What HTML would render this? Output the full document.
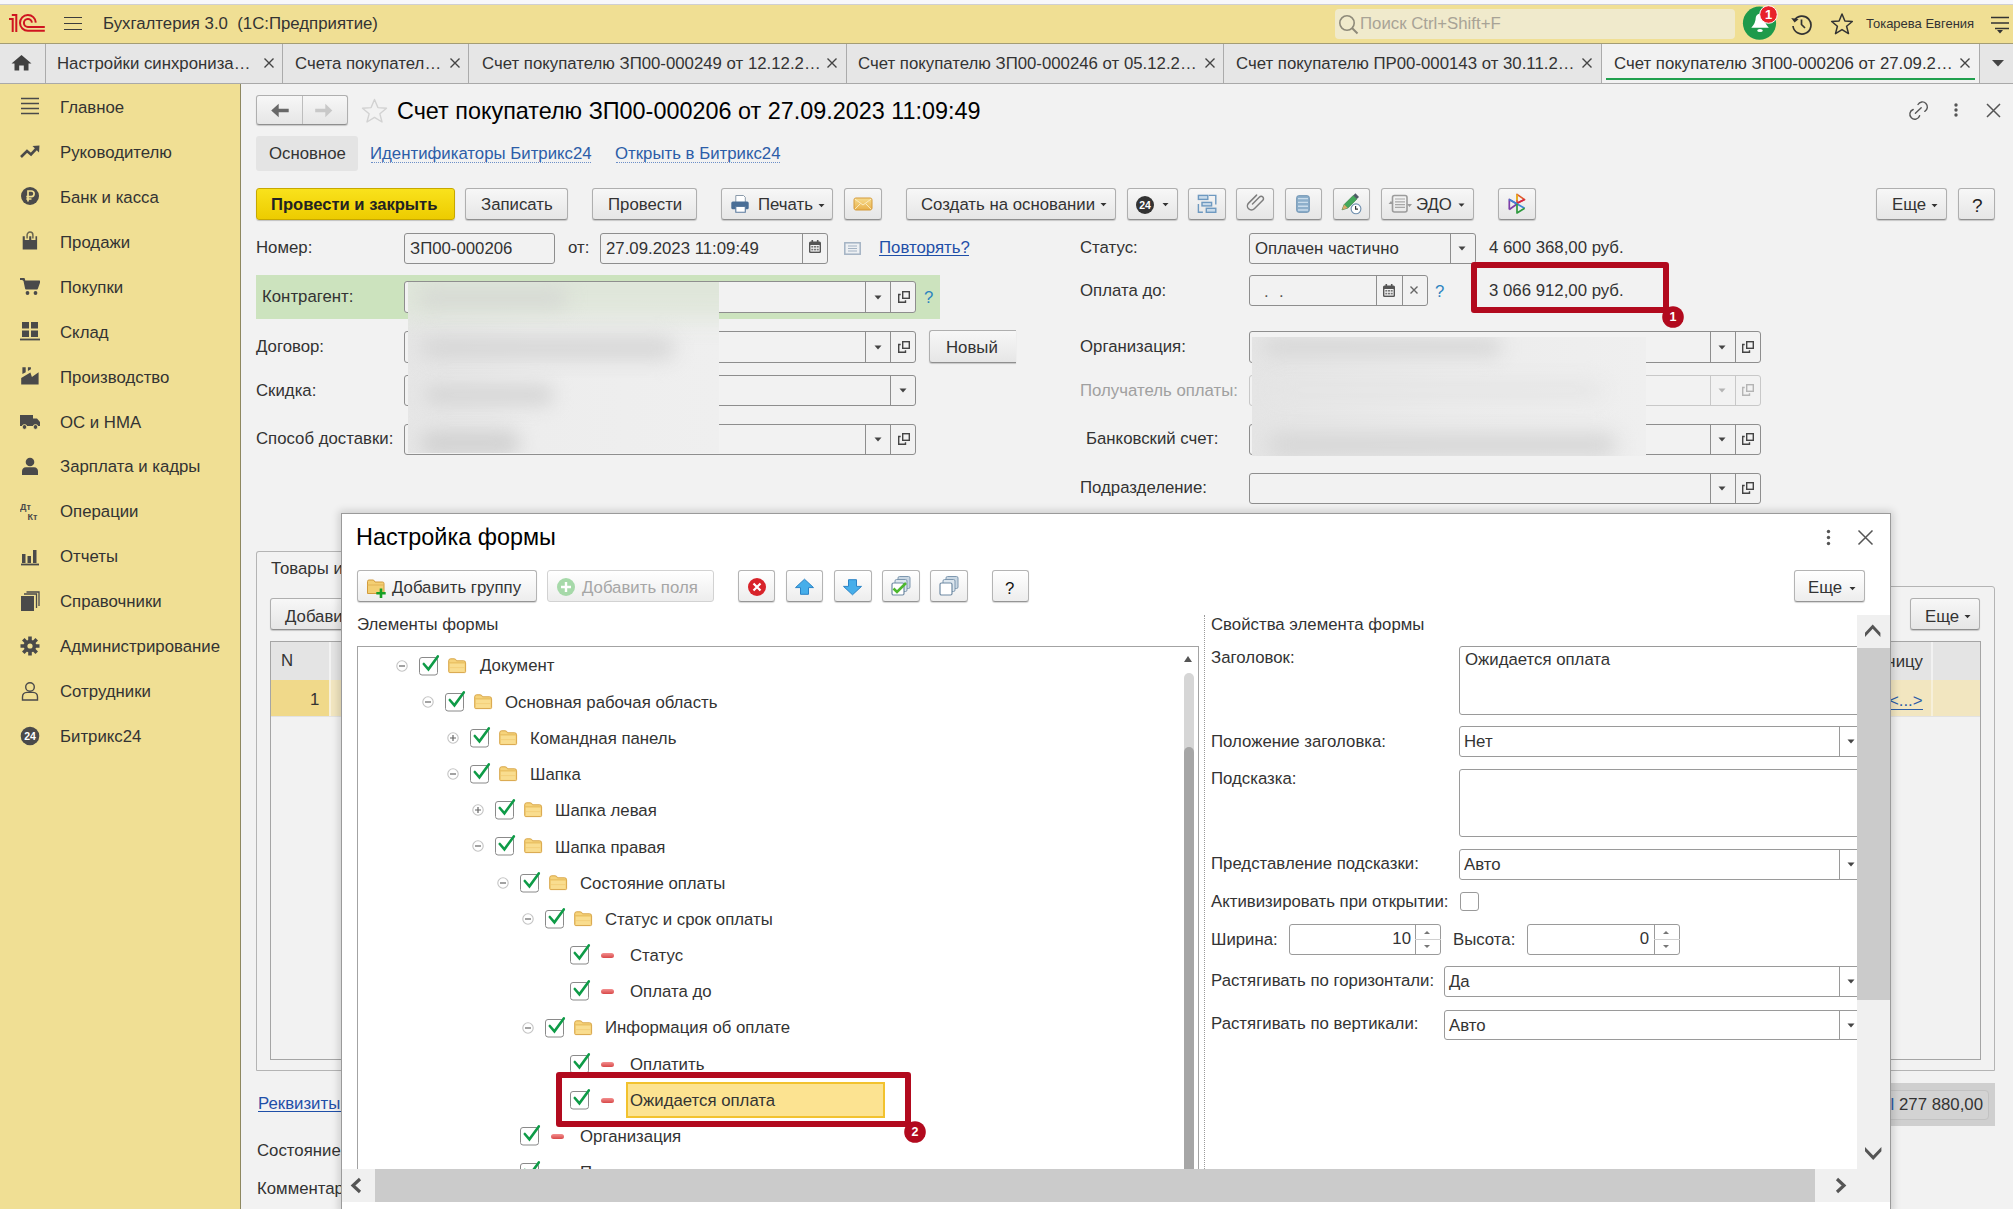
<!DOCTYPE html><html><head><meta charset="utf-8"><style>
html,body{margin:0;padding:0;width:2013px;height:1209px;overflow:hidden;background:#F2F2F2;font-family:"Liberation Sans",sans-serif;}
.t{position:absolute;white-space:pre;line-height:1;font-family:"Liberation Sans",sans-serif;}
.r{position:absolute;box-sizing:border-box;}
</style></head><body>
<div class="r" style="left:0px;top:0px;width:2013px;height:5px;background:#F7F7FB"></div>
<div class="r" style="left:0px;top:4px;width:2013px;height:1px;background:#CFCFD4"></div>
<div class="r" style="left:0px;top:5px;width:2013px;height:38px;background:#F0DF94"></div>
<div class="r" style="left:0px;top:43px;width:2013px;height:1px;background:#A49D74"></div>
<svg class="r" style="left:0px;top:0px;" width="50" height="40" viewBox="0 0 50 40"><g fill="none" stroke="#CF1520" stroke-width="2">
<path d="M9 19 H12.7 V32"/>
<path d="M11.8 15 H16.3 V32"/>
<path d="M35.8 22.6 A7.9 7.9 0 1 0 27.9 30.8 H44.8"/>
<path d="M31.9 22.6 A4 4 0 1 0 27.9 26.9 H44.8"/>
</g></svg>
<div class="r" style="left:64px;top:17px;width:18px;height:2px;background:#3c3c3c;height:1.3px"></div>
<div class="r" style="left:64px;top:23px;width:18px;height:2px;background:#3c3c3c;height:1.3px"></div>
<div class="r" style="left:64px;top:29px;width:18px;height:2px;background:#3c3c3c;height:1.3px"></div>
<div class="t" style="left:103px;top:16px;font-size:16.8px;color:#333;font-weight:400;">Бухгалтерия 3.0  (1С:Предприятие)</div>
<div class="r" style="left:1335px;top:9px;width:400px;height:30px;background:#F0EACC;border-radius:4px"></div>
<svg class="r" style="left:1338px;top:14px;" width="22" height="22" viewBox="0 0 22 22"><circle cx="9" cy="9" r="7.2" fill="none" stroke="#8E8A7A" stroke-width="1.6"/><path d="M14 14 L19.5 19.5" stroke="#8E8A7A" stroke-width="2"/></svg>
<div class="t" style="left:1360px;top:16px;font-size:16.8px;color:#A8A396;font-weight:400;">Поиск Ctrl+Shift+F</div>
<svg class="r" style="left:1742px;top:6px;" width="36" height="36" viewBox="0 0 36 36"><circle cx="17.5" cy="17.2" r="16.6" fill="#1E9A4B"/><path d="M9.3 21.8 L26.8 21.8 Q22.3 17 22.3 12 A4.3 4.3 0 0 0 13.7 12 Q13.7 17 9.3 21.8Z" fill="#fff"/><ellipse cx="18" cy="24.6" rx="2.8" ry="1.5" fill="#fff"/></svg>
<svg class="r" style="left:1759px;top:5px;" width="20" height="20" viewBox="0 0 20 20"><circle cx="9.5" cy="9.5" r="8.8" fill="#E8222A" stroke="#fff" stroke-width="1"/><text x="9.6" y="14.2" font-family="Liberation Sans" font-weight="700" font-size="13" fill="#fff" text-anchor="middle">1</text></svg>
<svg class="r" style="left:1789px;top:12px;" width="24" height="24" viewBox="0 0 24 24"><path d="M5.2 8.5 A9 9 0 1 1 4 14" fill="none" stroke="#333" stroke-width="1.7"/><path d="M2.2 6 L5.6 10.6 L9.6 7.2 Z" fill="#333"/><path d="M12.5 7.5 V12.5 L16 16" fill="none" stroke="#333" stroke-width="1.7"/></svg>
<svg class="r" style="left:1830px;top:12px;" width="24" height="24" viewBox="0 0 24 24"><path d="M12 2 L14.9 9 L22.3 9.5 L16.6 14.3 L18.5 21.6 L12 17.6 L5.5 21.6 L7.4 14.3 L1.7 9.5 L9.1 9 Z" fill="none" stroke="#333" stroke-width="1.5" stroke-linejoin="round"/></svg>
<div class="t" style="left:1866px;top:17px;font-size:13px;color:#333;font-weight:400;">Токарева Евгения</div>
<svg class="r" style="left:1988px;top:14px;" width="24" height="22" viewBox="0 0 24 22"><path d="M3 3.5 H21 M3 9 H21 M7 14.5 H21" stroke="#333" stroke-width="1.5"/><path d="M9 16 L15 16 L12 19.5 Z" fill="#333"/></svg>
<div class="r" style="left:0px;top:44px;width:2013px;height:39px;background:#E6E6E6"></div>
<div class="r" style="left:1602px;top:44px;width:377px;height:39px;background:#F2F2F2"></div>
<div class="r" style="left:0px;top:83px;width:2013px;height:1px;background:#A9A9A9"></div>
<div class="r" style="left:45px;top:44px;width:1px;height:39px;background:#ABABAB"></div>
<div class="r" style="left:282px;top:44px;width:1px;height:39px;background:#ABABAB"></div>
<div class="r" style="left:468px;top:44px;width:1px;height:39px;background:#ABABAB"></div>
<div class="r" style="left:846px;top:44px;width:1px;height:39px;background:#ABABAB"></div>
<div class="r" style="left:1223px;top:44px;width:1px;height:39px;background:#ABABAB"></div>
<div class="r" style="left:1601px;top:44px;width:1px;height:39px;background:#ABABAB"></div>
<div class="r" style="left:1979px;top:44px;width:1px;height:39px;background:#ABABAB"></div>
<div class="r" style="left:1606px;top:78px;width:369px;height:2px;background:#21A04E"></div>
<svg class="r" style="left:11px;top:54px;" width="21" height="18" viewBox="0 0 21 18"><path d="M10.5 1 L20.5 9.5 L17.5 9.5 L17.5 16.5 L12.8 16.5 L12.8 11.5 L8.2 11.5 L8.2 16.5 L3.5 16.5 L3.5 9.5 L0.5 9.5 Z" fill="#404040"/></svg>
<div class="t" style="left:57px;top:56px;font-size:16.8px;color:#333;font-weight:400;">Настройки синхрониза…</div>
<svg class="r" style="left:263px;top:57px;" width="12" height="12" viewBox="0 0 12 12"><path d="M1.5 1.5 L10.5 10.5 M10.5 1.5 L1.5 10.5" stroke="#444" stroke-width="1.4"/></svg>
<div class="t" style="left:295px;top:56px;font-size:16.8px;color:#333;font-weight:400;">Счета покупател…</div>
<svg class="r" style="left:449px;top:57px;" width="12" height="12" viewBox="0 0 12 12"><path d="M1.5 1.5 L10.5 10.5 M10.5 1.5 L1.5 10.5" stroke="#444" stroke-width="1.4"/></svg>
<div class="t" style="left:482px;top:56px;font-size:16.8px;color:#333;font-weight:400;">Счет покупателю ЗП00-000249 от 12.12.2…</div>
<svg class="r" style="left:826px;top:57px;" width="12" height="12" viewBox="0 0 12 12"><path d="M1.5 1.5 L10.5 10.5 M10.5 1.5 L1.5 10.5" stroke="#444" stroke-width="1.4"/></svg>
<div class="t" style="left:858px;top:56px;font-size:16.8px;color:#333;font-weight:400;">Счет покупателю ЗП00-000246 от 05.12.2…</div>
<svg class="r" style="left:1204px;top:57px;" width="12" height="12" viewBox="0 0 12 12"><path d="M1.5 1.5 L10.5 10.5 M10.5 1.5 L1.5 10.5" stroke="#444" stroke-width="1.4"/></svg>
<div class="t" style="left:1236px;top:56px;font-size:16.8px;color:#333;font-weight:400;">Счет покупателю ПР00-000143 от 30.11.2…</div>
<svg class="r" style="left:1581px;top:57px;" width="12" height="12" viewBox="0 0 12 12"><path d="M1.5 1.5 L10.5 10.5 M10.5 1.5 L1.5 10.5" stroke="#444" stroke-width="1.4"/></svg>
<div class="t" style="left:1614px;top:56px;font-size:16.8px;color:#333;font-weight:400;">Счет покупателю ЗП00-000206 от 27.09.2…</div>
<svg class="r" style="left:1959px;top:57px;" width="12" height="12" viewBox="0 0 12 12"><path d="M1.5 1.5 L10.5 10.5 M10.5 1.5 L1.5 10.5" stroke="#444" stroke-width="1.4"/></svg>
<svg class="r" style="left:1990px;top:57px;" width="16" height="12" viewBox="0 0 16 12"><path d="M2 3 L14 3 L8 9.5 Z" fill="#444"/></svg>
<div class="r" style="left:0px;top:84px;width:241px;height:1125px;background:#F0DF94"></div>
<div class="r" style="left:240px;top:84px;width:1px;height:1125px;background:#8E8860"></div>
<svg class="r" style="left:20px;top:96px;" width="20" height="20" viewBox="0 0 20 20"><path d="M1 2.5 H19 M1 7.5 H19 M1 12.5 H19 M1 17.5 H19" stroke="#4a4a4a" stroke-width="1.6"/></svg>
<div class="t" style="left:60px;top:100px;font-size:16.8px;color:#333;font-weight:400;">Главное</div>
<svg class="r" style="left:20px;top:141px;" width="20" height="20" viewBox="0 0 20 20"><path d="M1 16 L7 10 L11 13.5 L17 7" fill="none" stroke="#4a4a4a" stroke-width="2.6"/><path d="M12.5 5 L19.5 4.5 L19 11.5 Z" fill="#4a4a4a"/></svg>
<div class="t" style="left:60px;top:145px;font-size:16.8px;color:#333;font-weight:400;">Руководителю</div>
<svg class="r" style="left:20px;top:186px;" width="20" height="20" viewBox="0 0 20 20"><circle cx="10" cy="10" r="9" fill="#4a4a4a"/><path d="M8 15.5 V5 H11.3 A2.8 2.8 0 0 1 11.3 10.6 H6.3 M6.3 13 H11.5" fill="none" stroke="#F0DF94" stroke-width="1.7"/></svg>
<div class="t" style="left:60px;top:190px;font-size:16.8px;color:#333;font-weight:400;">Банк и касса</div>
<svg class="r" style="left:20px;top:231px;" width="20" height="20" viewBox="0 0 20 20"><path d="M2.7 5.2 H4.8 V8.9 H9.2 V5.2 H11.3 V8.9 H15.5 V5.2 H17.1 V18.6 H2.7Z" fill="#4a4a4a"/><path d="M7.1 7.6 V4 A2.9 2.9 0 0 1 12.9 4 V7.6" fill="none" stroke="#6a6550" stroke-width="1.5"/></svg>
<div class="t" style="left:60px;top:235px;font-size:16.8px;color:#333;font-weight:400;">Продажи</div>
<svg class="r" style="left:20px;top:276px;" width="20" height="20" viewBox="0 0 20 20"><path d="M0 3 H4 L6 12.5 H17 L19.5 5.5 H5" fill="#4a4a4a" stroke="#4a4a4a" stroke-width="1.8" stroke-linejoin="round"/><circle cx="7.5" cy="17" r="1.9" fill="#4a4a4a"/><circle cx="15.5" cy="17" r="1.9" fill="#4a4a4a"/></svg>
<div class="t" style="left:60px;top:280px;font-size:16.8px;color:#333;font-weight:400;">Покупки</div>
<svg class="r" style="left:20px;top:321px;" width="20" height="20" viewBox="0 0 20 20"><path d="M2 1 H9 V7.5 H2 Z M11 1 H18 V7.5 H11 Z M2 9.5 H9 V16 H2 Z M11 9.5 H18 V16 H11 Z" fill="#4a4a4a"/><path d="M0 18.5 H20" stroke="#4a4a4a" stroke-width="1.8"/></svg>
<div class="t" style="left:60px;top:325px;font-size:16.8px;color:#333;font-weight:400;">Склад</div>
<svg class="r" style="left:20px;top:366px;" width="20" height="20" viewBox="0 0 20 20"><path d="M2.4 1.2 H5.7 V6.2 L2.4 8.1Z M7.9 1.2 H10.9 V3.2 L7.9 4.9Z M1.2 18.6 V11.9 L10.4 6.4 L11.9 10.9 L18.6 6.2 V18.6Z" fill="#4a4a4a"/></svg>
<div class="t" style="left:60px;top:370px;font-size:16.8px;color:#333;font-weight:400;">Производство</div>
<svg class="r" style="left:20px;top:411px;" width="20" height="20" viewBox="0 0 20 20"><path d="M0 4 H13 V15 H0 Z M13 7.5 H17 L20 11 V15 H13Z" fill="#4a4a4a"/><circle cx="4.5" cy="16" r="2.4" fill="#4a4a4a" stroke="#F0DF94" stroke-width="1"/><circle cx="15.5" cy="16" r="2.4" fill="#4a4a4a" stroke="#F0DF94" stroke-width="1"/></svg>
<div class="t" style="left:60px;top:415px;font-size:16.8px;color:#333;font-weight:400;">ОС и НМА</div>
<svg class="r" style="left:20px;top:456px;" width="20" height="20" viewBox="0 0 20 20"><circle cx="10" cy="6" r="4.3" fill="#4a4a4a"/><path d="M2 19 V15.5 Q2 11.5 6 11.3 H14 Q18 11.5 18 15.5 V19 Z" fill="#4a4a4a"/></svg>
<div class="t" style="left:60px;top:459px;font-size:16.8px;color:#333;font-weight:400;">Зарплата и кадры</div>
<svg class="r" style="left:20px;top:501px;" width="20" height="20" viewBox="0 0 20 20"><text x="0" y="9" font-family="Liberation Sans" font-size="9" font-weight="700" fill="#4a4a4a">Дт</text><text x="7.5" y="19" font-family="Liberation Sans" font-size="9" font-weight="700" fill="#4a4a4a">Кт</text></svg>
<div class="t" style="left:60px;top:504px;font-size:16.8px;color:#333;font-weight:400;">Операции</div>
<svg class="r" style="left:20px;top:546px;" width="20" height="20" viewBox="0 0 20 20"><path d="M1 18.5 H19" stroke="#4a4a4a" stroke-width="1.8"/><path d="M2 8 H5.5 V17 H2 Z M7.5 10 H11 V17 H7.5 Z M13 4 H16.5 V17 H13 Z" fill="#4a4a4a"/></svg>
<div class="t" style="left:60px;top:549px;font-size:16.8px;color:#333;font-weight:400;">Отчеты</div>
<svg class="r" style="left:20px;top:591px;" width="20" height="20" viewBox="0 0 20 20"><path d="M1 5 H14 V20 H1 Z" fill="#4a4a4a"/><path d="M4 3 H16.5 V17 M6.5 1 H19 V15" fill="none" stroke="#4a4a4a" stroke-width="1.3"/></svg>
<div class="t" style="left:60px;top:594px;font-size:16.8px;color:#333;font-weight:400;">Справочники</div>
<svg class="r" style="left:20px;top:636px;" width="20" height="20" viewBox="0 0 20 20"><g fill="#4a4a4a"><circle cx="10" cy="10" r="6.3"/><path d="M8.2 0.5 H11.8 V5 H8.2Z M8.2 15 H11.8 V19.5 H8.2Z M0.5 8.2 V11.8 H5 V8.2Z M15 8.2 V11.8 H19.5 V8.2Z" /><path d="M8.2 0.5 H11.8 V5 H8.2Z M8.2 15 H11.8 V19.5 H8.2Z M0.5 8.2 V11.8 H5 V8.2Z M15 8.2 V11.8 H19.5 V8.2Z" transform="rotate(45 10 10)"/></g><circle cx="10" cy="10" r="2.6" fill="#F0DF94"/></svg>
<div class="t" style="left:60px;top:639px;font-size:16.8px;color:#333;font-weight:400;">Администрирование</div>
<svg class="r" style="left:20px;top:681px;" width="20" height="20" viewBox="0 0 20 20"><circle cx="10" cy="6" r="4.3" fill="none" stroke="#4a4a4a" stroke-width="1.4"/><path d="M2.5 19 V16 Q2.5 11.6 7 11.4 H13 Q17.5 11.6 17.5 16 V19 Z" fill="none" stroke="#4a4a4a" stroke-width="1.4"/></svg>
<div class="t" style="left:60px;top:684px;font-size:16.8px;color:#333;font-weight:400;">Сотрудники</div>
<svg class="r" style="left:20px;top:726px;" width="20" height="20" viewBox="0 0 20 20"><circle cx="10" cy="10" r="9.3" fill="#4a4a4a"/><text x="10" y="14" font-family="Liberation Sans" font-size="10.5" font-weight="700" fill="#fff" text-anchor="middle">24</text></svg>
<div class="t" style="left:60px;top:729px;font-size:16.8px;color:#333;font-weight:400;">Битрикс24</div>
<div class="r" style="left:256px;top:95px;width:92px;height:30px;background:linear-gradient(#F7F7F7,#E6E6E6);border:1px solid #AFAFAF;border-bottom-color:#8F8F8F;border-radius:3px;box-shadow:0 1px 1px rgba(0,0,0,0.18);"></div>
<div class="r" style="left:302px;top:96px;width:1px;height:28px;background:#BDBDBD"></div>
<svg class="r" style="left:269px;top:101px;" width="22" height="18" viewBox="0 0 22 18"><path d="M2.2 9.5 L9.7 2.8 L9.7 7.8 L19.7 7.8 L19.7 11.2 L9.7 11.2 L9.7 16.2 Z" fill="#686868"/></svg>
<svg class="r" style="left:313px;top:101px;" width="22" height="18" viewBox="0 0 22 18"><path d="M19.3 9.5 L12.3 2.8 L12.3 7.8 L2.2 7.8 L2.2 11.2 L12.3 11.2 L12.3 16.2 Z" fill="#C8C8C8"/></svg>
<svg class="r" style="left:361px;top:98px;" width="27" height="25" viewBox="0 0 27 25"><path d="M13.5 1.5 L16.9 9.6 L25.5 10.2 L18.9 15.8 L21 24 L13.5 19.4 L6 24 L8.1 15.8 L1.5 10.2 L10.1 9.6 Z" fill="none" stroke="#D2D2D2" stroke-width="1.4" stroke-linejoin="round"/></svg>
<div class="t" style="left:397px;top:100px;font-size:23.4px;color:#000;font-weight:400;">Счет покупателю ЗП00-000206 от 27.09.2023 11:09:49</div>
<svg class="r" style="left:1906px;top:99px;" width="24" height="22" viewBox="0 0 24 22"><g fill="none" stroke="#555" stroke-width="1.4" stroke-linecap="round"><path d="M12 5.5 A5 5 0 1 1 18.8 12.3"/><path d="M7.2 10.5 A5 5 0 1 0 13.6 16.7"/><path d="M9.4 14.2 L15.2 8.7"/></g></svg>
<svg class="r" style="left:1953px;top:102px;" width="6" height="6" viewBox="0 0 6 6"><circle cx="3" cy="3" r="1.7" fill="#555"/></svg>
<svg class="r" style="left:1953px;top:107px;" width="6" height="6" viewBox="0 0 6 6"><circle cx="3" cy="3" r="1.7" fill="#555"/></svg>
<svg class="r" style="left:1953px;top:112px;" width="6" height="6" viewBox="0 0 6 6"><circle cx="3" cy="3" r="1.7" fill="#555"/></svg>
<svg class="r" style="left:1985px;top:102px;" width="17" height="16.8" viewBox="0 0 17 16.8"><path d="M2 2 L15 15 M15 2 L2 15" stroke="#555" stroke-width="1.5"/></svg>
<div class="r" style="left:256px;top:136px;width:102px;height:35px;background:#E4E4E4;border-radius:3px"></div>
<div class="t" style="left:269px;top:146px;font-size:16.8px;color:#333;font-weight:400;">Основное</div>
<div class="t" style="left:370px;top:146px;font-size:16.8px;color:#2C5DA8;font-weight:400;">Идентификаторы Битрикс24</div>
<div class="r" style="left:371px;top:162px;width:220px;height:1px;border-bottom:1px dotted #6C8FC8"></div>
<div class="t" style="left:615px;top:146px;font-size:16.8px;color:#2C5DA8;font-weight:400;">Открыть в Битрикс24</div>
<div class="r" style="left:616px;top:162px;width:164px;height:1px;border-bottom:1px dotted #6C8FC8"></div>
<div class="r" style="left:256px;top:188px;width:199px;height:32px;background:linear-gradient(#F9E21C,#EDCC00);border:1px solid #C7A800;border-radius:3px;box-shadow:0 1px 1px rgba(0,0,0,0.2)"></div>
<div class="t" style="left:271px;top:197px;font-size:16.6px;color:#222;font-weight:700;">Провести и закрыть</div>
<div class="r" style="left:465px;top:188px;width:103px;height:32px;background:linear-gradient(#F7F7F7,#E6E6E6);border:1px solid #AFAFAF;border-bottom-color:#8F8F8F;border-radius:3px;box-shadow:0 1px 1px rgba(0,0,0,0.18);"></div>
<div class="t" style="left:481px;top:197px;font-size:16.8px;color:#333;font-weight:400;">Записать</div>
<div class="r" style="left:592px;top:188px;width:105px;height:32px;background:linear-gradient(#F7F7F7,#E6E6E6);border:1px solid #AFAFAF;border-bottom-color:#8F8F8F;border-radius:3px;box-shadow:0 1px 1px rgba(0,0,0,0.18);"></div>
<div class="t" style="left:608px;top:197px;font-size:16.8px;color:#333;font-weight:400;">Провести</div>
<div class="r" style="left:721px;top:188px;width:112px;height:32px;background:linear-gradient(#F7F7F7,#E6E6E6);border:1px solid #AFAFAF;border-bottom-color:#8F8F8F;border-radius:3px;box-shadow:0 1px 1px rgba(0,0,0,0.18);"></div>
<svg class="r" style="left:729px;top:193px;" width="22" height="22" viewBox="0 0 22 22"><path d="M6.8 2.5 H14.5 L16.3 4.3 V10 H6.8Z" fill="#fff" stroke="#8A9AAA" stroke-width="1"/><rect x="2.3" y="8.4" width="17.4" height="7.9" rx="1.6" fill="#4A6E96"/><path d="M6.8 13.5 H16.3 V19.3 H6.8Z" fill="#fff" stroke="#5A7A9E" stroke-width="1.1"/></svg>
<div class="t" style="left:758px;top:197px;font-size:16.8px;color:#333;font-weight:400;">Печать</div>
<svg class="r" style="left:817px;top:203px;" width="9" height="6" viewBox="0 0 9 6"><path d="M1.5 1 H7.5 L4.5 4.3Z" fill="#333"/></svg>
<div class="r" style="left:844px;top:188px;width:38px;height:32px;background:linear-gradient(#F7F7F7,#E6E6E6);border:1px solid #AFAFAF;border-bottom-color:#8F8F8F;border-radius:3px;box-shadow:0 1px 1px rgba(0,0,0,0.18);"></div>
<svg class="r" style="left:853px;top:197px;" width="20" height="14" viewBox="0 0 20 14"><defs><linearGradient id="env" x1="0" y1="0" x2="0" y2="1"><stop offset="0" stop-color="#F7DC8E"/><stop offset="1" stop-color="#E8B04A"/></linearGradient></defs><rect x="1" y="1" width="18" height="12" rx="1.8" fill="url(#env)" stroke="#D49A3A" stroke-width="1"/><path d="M1.8 2 L10 8 L18.2 2 M1.8 12.3 L7.5 6.5 M18.2 12.3 L12.5 6.5" fill="none" stroke="#FBEBC0" stroke-width="1"/></svg>
<div class="r" style="left:906px;top:188px;width:210px;height:32px;background:linear-gradient(#F7F7F7,#E6E6E6);border:1px solid #AFAFAF;border-bottom-color:#8F8F8F;border-radius:3px;box-shadow:0 1px 1px rgba(0,0,0,0.18);"></div>
<div class="t" style="left:921px;top:197px;font-size:16.8px;color:#333;font-weight:400;">Создать на основании</div>
<svg class="r" style="left:1099px;top:202px;" width="9" height="6" viewBox="0 0 9 6"><path d="M1.5 1 H7.5 L4.5 4.3Z" fill="#333"/></svg>
<div class="r" style="left:1127px;top:188px;width:51px;height:32px;background:linear-gradient(#F7F7F7,#E6E6E6);border:1px solid #AFAFAF;border-bottom-color:#8F8F8F;border-radius:3px;box-shadow:0 1px 1px rgba(0,0,0,0.18);"></div>
<svg class="r" style="left:1135px;top:195px;" width="20" height="20" viewBox="0 0 20 20"><circle cx="10" cy="10" r="9" fill="#333"/><text x="10" y="14" font-family="Liberation Sans" font-size="10.5" font-weight="700" fill="#fff" text-anchor="middle">24</text></svg>
<svg class="r" style="left:1161px;top:202px;" width="9" height="6" viewBox="0 0 9 6"><path d="M1.5 1 H7.5 L4.5 4.3Z" fill="#333"/></svg>
<div class="r" style="left:1188px;top:188px;width:38px;height:32px;background:linear-gradient(#F7F7F7,#E6E6E6);border:1px solid #AFAFAF;border-bottom-color:#8F8F8F;border-radius:3px;box-shadow:0 1px 1px rgba(0,0,0,0.18);"></div>
<svg class="r" style="left:1196px;top:193px;" width="22" height="22" viewBox="0 0 22 22"><g fill="#C9DBEA" stroke="#6E99C0" stroke-width="1.4"><rect x="2.4" y="2.4" width="9.4" height="4"/><rect x="6" y="9.4" width="9.6" height="3.5"/><rect x="10.3" y="15.3" width="9.5" height="4"/></g><path d="M12.8 2.4 H19.8 V11.4 M2.4 10.9 V19.3 H6.9" fill="none" stroke="#6E99C0" stroke-width="1.4"/></svg>
<div class="r" style="left:1236px;top:188px;width:38px;height:32px;background:linear-gradient(#F7F7F7,#E6E6E6);border:1px solid #AFAFAF;border-bottom-color:#8F8F8F;border-radius:3px;box-shadow:0 1px 1px rgba(0,0,0,0.18);"></div>
<svg class="r" style="left:1244px;top:192px;" width="22" height="22" viewBox="0 0 22 22"><path d="M8.5 12 L15.5 5 A2.3 2.3 0 0 1 18.8 8.3 L10.3 16.8 A4 4 0 0 1 4.6 11.1 L12.6 3.1" fill="none" stroke="#7E7E7E" stroke-width="1.5" stroke-linecap="round"/></svg>
<div class="r" style="left:1285px;top:188px;width:37px;height:32px;background:linear-gradient(#F7F7F7,#E6E6E6);border:1px solid #AFAFAF;border-bottom-color:#8F8F8F;border-radius:3px;box-shadow:0 1px 1px rgba(0,0,0,0.18);"></div>
<svg class="r" style="left:1296px;top:195px;" width="14" height="18" viewBox="0 0 14 18"><rect x="0.7" y="0.7" width="12.6" height="16.6" rx="2" fill="#8DAFCB" stroke="#6E93B3" stroke-width="1"/><path d="M2 3.6 H12 M2 7.4 H12 M2 11.3 H12 M2 15 H12" stroke="#C9DCEB" stroke-width="1.4"/></svg>
<div class="r" style="left:1333px;top:188px;width:37px;height:32px;background:linear-gradient(#F7F7F7,#E6E6E6);border:1px solid #AFAFAF;border-bottom-color:#8F8F8F;border-radius:3px;box-shadow:0 1px 1px rgba(0,0,0,0.18);"></div>
<svg class="r" style="left:1340px;top:193px;" width="24" height="24" viewBox="0 0 24 24"><path d="M2 16.8 L4.2 11.5 L13.3 2.4 L16.9 6 L7.8 15.1 Z" fill="#43A85A" stroke="#2E7D3E" stroke-width="0.7"/><path d="M13.3 2.4 L15.4 0.3 L19 3.9 L16.9 6Z" fill="#4E5A66"/><path d="M2 16.8 L4.2 11.5 L7.8 15.1Z" fill="#D9A86A"/><circle cx="16" cy="15.8" r="4.9" fill="#fff" stroke="#6F8FAE" stroke-width="1.1"/><path d="M15.6 13 V16.2 H18" fill="none" stroke="#333" stroke-width="1.2"/></svg>
<div class="r" style="left:1381px;top:188px;width:93px;height:32px;background:linear-gradient(#F7F7F7,#E6E6E6);border:1px solid #AFAFAF;border-bottom-color:#8F8F8F;border-radius:3px;box-shadow:0 1px 1px rgba(0,0,0,0.18);"></div>
<svg class="r" style="left:1388px;top:193px;" width="24" height="22" viewBox="0 0 24 22"><rect x="4.5" y="2.5" width="14.5" height="16.5" rx="2" fill="none" stroke="#9C9C9C" stroke-width="1.6"/><path d="M7 6 H17 M7 8.8 H17 M7 11.6 H17 M7 14.4 H17" stroke="#A8A8A8" stroke-width="1.2"/><path d="M0.5 11 L3 8 L5.5 11Z M19 11 L21.5 14 L24 11Z" fill="#9C9C9C"/></svg>
<div class="t" style="left:1416px;top:197px;font-size:16.8px;color:#333;font-weight:400;">ЭДО</div>
<svg class="r" style="left:1458px;top:203px;" width="8" height="5" viewBox="0 0 8 5"><path d="M0.5 0.5 H6.5 L3.5 3.8Z" fill="#333"/></svg>
<div class="r" style="left:1498px;top:188px;width:38px;height:32px;background:linear-gradient(#F7F7F7,#E6E6E6);border:1px solid #AFAFAF;border-bottom-color:#8F8F8F;border-radius:3px;box-shadow:0 1px 1px rgba(0,0,0,0.18);"></div>
<svg class="r" style="left:1505px;top:190px;" width="24" height="26" viewBox="0 0 24 26"><g fill="none" stroke-width="1.7" stroke-linejoin="round"><path d="M12 13.5 V4.4 L19.6 9.6 L12 13.2" stroke="#E0592A"/><path d="M19.6 9.6 L12 13.2" stroke="#D8234A"/><path d="M4.3 19.5 V9.4 L12 14" stroke="#7D3FA8"/><path d="M4.3 19.5 L12 14" stroke="#7D3FA8"/><path d="M4.3 9.4 L19.6 18.3" stroke="#3D86D6"/><path d="M12 13.8 V23 L19.6 18.3" stroke="#2E9A3E"/></g><path d="M12 4.4 V10" stroke="#E8B820" stroke-width="1.7"/></svg>
<div class="r" style="left:1876px;top:188px;width:71px;height:32px;background:linear-gradient(#F7F7F7,#E6E6E6);border:1px solid #AFAFAF;border-bottom-color:#8F8F8F;border-radius:3px;box-shadow:0 1px 1px rgba(0,0,0,0.18);"></div>
<div class="t" style="left:1892px;top:197px;font-size:16.8px;color:#333;font-weight:400;">Еще</div>
<svg class="r" style="left:1930px;top:203px;" width="9" height="6" viewBox="0 0 9 6"><path d="M1.5 1 H7.5 L4.5 4.3Z" fill="#333"/></svg>
<div class="r" style="left:1958px;top:188px;width:37px;height:32px;background:linear-gradient(#F7F7F7,#E6E6E6);border:1px solid #AFAFAF;border-bottom-color:#8F8F8F;border-radius:3px;box-shadow:0 1px 1px rgba(0,0,0,0.18);"></div>
<div class="t" style="left:1972px;top:196px;font-size:19px;color:#222;font-weight:400;">?</div>
<div class="t" style="left:256px;top:240px;font-size:16.8px;color:#333;font-weight:400;">Номер:</div>
<div class="r" style="left:404px;top:233px;width:151px;height:31px;border:1px solid #8E8E8E;border-radius:3px;background:#F2F2F2"></div>
<div class="t" style="left:410px;top:241px;font-size:16.8px;color:#333;font-weight:400;">ЗП00-000206</div>
<div class="t" style="left:568px;top:240px;font-size:16.8px;color:#333;font-weight:400;">от:</div>
<div class="r" style="left:600px;top:233px;width:228px;height:31px;border:1px solid #8E8E8E;border-radius:3px;background:#F2F2F2"></div>
<div class="r" style="left:802px;top:233px;width:1px;height:31px;background:#8E8E8E"></div>
<div class="t" style="left:606px;top:241px;font-size:16.8px;color:#333;font-weight:400;">27.09.2023 11:09:49</div>
<svg class="r" style="left:809px;top:240px;" width="12" height="13" viewBox="0 0 12 13"><rect x="0" y="1.6" width="12" height="11.4" rx="1.5" fill="#555"/><rect x="1.4" y="5" width="9.2" height="6.6" fill="#F2F2F2"/><g fill="#777"><rect x="2.3" y="6" width="2" height="1.6"/><rect x="5" y="6" width="2" height="1.6"/><rect x="7.7" y="6" width="2" height="1.6"/><rect x="2.3" y="8.8" width="2" height="1.6"/><rect x="5" y="8.8" width="2" height="1.6"/><rect x="7.7" y="8.8" width="2" height="1.6"/></g><rect x="2.5" y="0" width="1.6" height="3" fill="#555"/><rect x="7.9" y="0" width="1.6" height="3" fill="#555"/></svg>
<svg class="r" style="left:844px;top:242px;" width="17" height="13" viewBox="0 0 17 13"><rect x="0.8" y="0.8" width="15.4" height="11.4" fill="#EDF0F3" stroke="#A3B2C3" stroke-width="1.5"/><path d="M4 4 H13 M4 6.5 H13 M4 9 H13" stroke="#A3B2C3" stroke-width="1.1"/></svg>
<div class="t" style="left:879px;top:240px;font-size:16.8px;color:#1F4FA8;font-weight:400;">Повторять?</div>
<div class="r" style="left:879px;top:255px;width:90px;height:1px;background:#1F4FA8"></div>
<div class="r" style="left:256px;top:275px;width:684px;height:44px;background:#CCE3BE"></div>
<div class="t" style="left:262px;top:289px;font-size:16.8px;color:#333;font-weight:400;">Контрагент:</div>
<div class="r" style="left:404px;top:281px;width:512px;height:32px;border:1px solid #8E8E8E;border-radius:3px;background:#F2F2F2"></div>
<div class="r" style="left:865px;top:281px;width:1px;height:32px;background:#8E8E8E"></div>
<div class="r" style="left:890px;top:281px;width:1px;height:32px;background:#8E8E8E"></div>
<svg class="r" style="left:874px;top:295px;" width="8" height="5" viewBox="0 0 8 5"><path d="M0.5 0.5 H7.5 L4 4.5Z" fill="#444"/></svg>
<svg class="r" style="left:898px;top:291px;" width="12" height="12" viewBox="0 0 12 12"><g fill="none" stroke="#444" stroke-width="1.4"><rect x="4.7" y="0.7" width="6.6" height="6.6"/><path d="M2.7 3.5 H0.7 V11.3 H7.5 V9.3"/></g></svg>
<div class="t" style="left:924px;top:290px;font-size:16.8px;color:#2D84C0;font-weight:400;">?</div>
<div class="t" style="left:256px;top:339px;font-size:16.8px;color:#333;font-weight:400;">Договор:</div>
<div class="r" style="left:404px;top:331px;width:512px;height:32px;border:1px solid #8E8E8E;border-radius:3px;background:#F2F2F2"></div>
<div class="r" style="left:865px;top:331px;width:1px;height:32px;background:#8E8E8E"></div>
<div class="r" style="left:890px;top:331px;width:1px;height:32px;background:#8E8E8E"></div>
<svg class="r" style="left:874px;top:345px;" width="8" height="5" viewBox="0 0 8 5"><path d="M0.5 0.5 H7.5 L4 4.5Z" fill="#444"/></svg>
<svg class="r" style="left:898px;top:341px;" width="12" height="12" viewBox="0 0 12 12"><g fill="none" stroke="#444" stroke-width="1.4"><rect x="4.7" y="0.7" width="6.6" height="6.6"/><path d="M2.7 3.5 H0.7 V11.3 H7.5 V9.3"/></g></svg>
<div class="r" style="left:929px;top:330px;width:87px;height:33px;background:linear-gradient(#F7F7F7,#E6E6E6);border:1px solid #AFAFAF;border-bottom-color:#8F8F8F;border-radius:3px;box-shadow:0 1px 1px rgba(0,0,0,0.18);border-right:none;border-radius:3px 0 0 3px"></div>
<div class="t" style="left:946px;top:340px;font-size:16.8px;color:#333;font-weight:400;">Новый</div>
<div class="t" style="left:256px;top:383px;font-size:16.8px;color:#333;font-weight:400;">Скидка:</div>
<div class="r" style="left:404px;top:375px;width:512px;height:31px;border:1px solid #8E8E8E;border-radius:3px;background:#F2F2F2"></div>
<div class="r" style="left:890px;top:375px;width:1px;height:31px;background:#8E8E8E"></div>
<svg class="r" style="left:899px;top:388px;" width="8" height="5" viewBox="0 0 8 5"><path d="M0.5 0.5 H7.5 L4 4.5Z" fill="#444"/></svg>
<div class="t" style="left:256px;top:431px;font-size:16.8px;color:#333;font-weight:400;">Способ доставки:</div>
<div class="r" style="left:404px;top:424px;width:512px;height:31px;border:1px solid #8E8E8E;border-radius:3px;background:#F2F2F2"></div>
<div class="r" style="left:865px;top:424px;width:1px;height:31px;background:#8E8E8E"></div>
<div class="r" style="left:890px;top:424px;width:1px;height:31px;background:#8E8E8E"></div>
<svg class="r" style="left:874px;top:437px;" width="8" height="5" viewBox="0 0 8 5"><path d="M0.5 0.5 H7.5 L4 4.5Z" fill="#444"/></svg>
<svg class="r" style="left:898px;top:433px;" width="12" height="12" viewBox="0 0 12 12"><g fill="none" stroke="#444" stroke-width="1.4"><rect x="4.7" y="0.7" width="6.6" height="6.6"/><path d="M2.7 3.5 H0.7 V11.3 H7.5 V9.3"/></g></svg>
<div class="t" style="left:1080px;top:240px;font-size:16.8px;color:#333;font-weight:400;">Статус:</div>
<div class="r" style="left:1249px;top:233px;width:227px;height:31px;border:1px solid #8E8E8E;border-radius:3px;background:#F2F2F2"></div>
<div class="r" style="left:1450px;top:233px;width:1px;height:31px;background:#8E8E8E"></div>
<div class="t" style="left:1255px;top:241px;font-size:16.8px;color:#333;font-weight:400;">Оплачен частично</div>
<svg class="r" style="left:1458px;top:246px;" width="8" height="5" viewBox="0 0 8 5"><path d="M0.5 0.5 H7.5 L4 4.5Z" fill="#444"/></svg>
<div class="t" style="left:1489px;top:240px;font-size:16.8px;color:#333;font-weight:400;">4 600 368,00 руб.</div>
<div class="t" style="left:1080px;top:283px;font-size:16.8px;color:#333;font-weight:400;">Оплата до:</div>
<div class="r" style="left:1249px;top:275px;width:179px;height:31px;border:1px solid #8E8E8E;border-radius:3px;background:#F2F2F2"></div>
<div class="r" style="left:1376px;top:275px;width:1px;height:31px;background:#8E8E8E"></div>
<div class="r" style="left:1402px;top:275px;width:1px;height:31px;background:#8E8E8E"></div>
<div class="t" style="left:1264px;top:284px;font-size:16.8px;color:#555;font-weight:400;">.</div>
<div class="t" style="left:1279px;top:284px;font-size:16.8px;color:#555;font-weight:400;">.</div>
<svg class="r" style="left:1383px;top:284px;" width="12" height="13" viewBox="0 0 12 13"><rect x="0" y="1.6" width="12" height="11.4" rx="1.5" fill="#555"/><rect x="1.4" y="5" width="9.2" height="6.6" fill="#F2F2F2"/><g fill="#777"><rect x="2.3" y="6" width="2" height="1.6"/><rect x="5" y="6" width="2" height="1.6"/><rect x="7.7" y="6" width="2" height="1.6"/><rect x="2.3" y="8.8" width="2" height="1.6"/><rect x="5" y="8.8" width="2" height="1.6"/><rect x="7.7" y="8.8" width="2" height="1.6"/></g><rect x="2.5" y="0" width="1.6" height="3" fill="#555"/><rect x="7.9" y="0" width="1.6" height="3" fill="#555"/></svg>
<svg class="r" style="left:1409px;top:285px;" width="10" height="10" viewBox="0 0 10 10"><path d="M1.5 1.5 L8.5 8.5 M8.5 1.5 L1.5 8.5" stroke="#666" stroke-width="1.4"/></svg>
<div class="t" style="left:1435px;top:284px;font-size:16.8px;color:#2D84C0;font-weight:400;">?</div>
<div class="t" style="left:1489px;top:283px;font-size:16.8px;color:#333;font-weight:400;">3 066 912,00 руб.</div>
<div class="t" style="left:1080px;top:339px;font-size:16.8px;color:#333;font-weight:400;">Организация:</div>
<div class="r" style="left:1249px;top:331px;width:512px;height:32px;border:1px solid #8E8E8E;border-radius:3px;background:#F2F2F2"></div>
<div class="r" style="left:1710px;top:331px;width:1px;height:32px;background:#8E8E8E"></div>
<div class="r" style="left:1735px;top:331px;width:1px;height:32px;background:#8E8E8E"></div>
<svg class="r" style="left:1718px;top:345px;" width="8" height="5" viewBox="0 0 8 5"><path d="M0.5 0.5 H7.5 L4 4.5Z" fill="#444"/></svg>
<svg class="r" style="left:1742px;top:341px;" width="12" height="12" viewBox="0 0 12 12"><g fill="none" stroke="#444" stroke-width="1.4"><rect x="4.7" y="0.7" width="6.6" height="6.6"/><path d="M2.7 3.5 H0.7 V11.3 H7.5 V9.3"/></g></svg>
<div class="t" style="left:1080px;top:383px;font-size:16.8px;color:#A0A0A0;font-weight:400;">Получатель оплаты:</div>
<div class="r" style="left:1249px;top:375px;width:512px;height:31px;border:1px solid #C8C8C8;border-radius:3px;background:#F2F2F2"></div>
<div class="r" style="left:1710px;top:375px;width:1px;height:31px;background:#C8C8C8"></div>
<div class="r" style="left:1735px;top:375px;width:1px;height:31px;background:#C8C8C8"></div>
<svg class="r" style="left:1718px;top:388px;" width="8" height="5" viewBox="0 0 8 5"><path d="M0.5 0.5 H7.5 L4 4.5Z" fill="#B4B4B4"/></svg>
<svg class="r" style="left:1742px;top:384px;" width="12" height="12" viewBox="0 0 12 12"><g fill="none" stroke="#B4B4B4" stroke-width="1.4"><rect x="4.7" y="0.7" width="6.6" height="6.6"/><path d="M2.7 3.5 H0.7 V11.3 H7.5 V9.3"/></g></svg>
<div class="t" style="left:1086px;top:431px;font-size:16.8px;color:#333;font-weight:400;">Банковский счет:</div>
<div class="r" style="left:1249px;top:424px;width:512px;height:31px;border:1px solid #8E8E8E;border-radius:3px;background:#F2F2F2"></div>
<div class="r" style="left:1710px;top:424px;width:1px;height:31px;background:#8E8E8E"></div>
<div class="r" style="left:1735px;top:424px;width:1px;height:31px;background:#8E8E8E"></div>
<svg class="r" style="left:1718px;top:437px;" width="8" height="5" viewBox="0 0 8 5"><path d="M0.5 0.5 H7.5 L4 4.5Z" fill="#444"/></svg>
<svg class="r" style="left:1742px;top:433px;" width="12" height="12" viewBox="0 0 12 12"><g fill="none" stroke="#444" stroke-width="1.4"><rect x="4.7" y="0.7" width="6.6" height="6.6"/><path d="M2.7 3.5 H0.7 V11.3 H7.5 V9.3"/></g></svg>
<div class="t" style="left:1080px;top:480px;font-size:16.8px;color:#333;font-weight:400;">Подразделение:</div>
<div class="r" style="left:1249px;top:473px;width:512px;height:31px;border:1px solid #8E8E8E;border-radius:3px;background:#F2F2F2"></div>
<div class="r" style="left:1710px;top:473px;width:1px;height:31px;background:#8E8E8E"></div>
<div class="r" style="left:1735px;top:473px;width:1px;height:31px;background:#8E8E8E"></div>
<svg class="r" style="left:1718px;top:486px;" width="8" height="5" viewBox="0 0 8 5"><path d="M0.5 0.5 H7.5 L4 4.5Z" fill="#444"/></svg>
<svg class="r" style="left:1742px;top:482px;" width="12" height="12" viewBox="0 0 12 12"><g fill="none" stroke="#444" stroke-width="1.4"><rect x="4.7" y="0.7" width="6.6" height="6.6"/><path d="M2.7 3.5 H0.7 V11.3 H7.5 V9.3"/></g></svg>
<div class="r" style="left:408px;top:282px;width:311px;height:171px;overflow:hidden;background:linear-gradient(90deg,#E6E6E6,#EDEDED 40%,#EFEFEF)"><div style="position:absolute;left:-30px;top:-25px;width:420px;height:62px;background:#DFE6DA;border-radius:31px;filter:blur(12px)"></div><div style="position:absolute;left:10px;top:6px;width:150px;height:20px;background:#D6D9D4;border-radius:10px;filter:blur(9px)"></div><div style="position:absolute;left:12px;top:55px;width:255px;height:22px;background:#D5D5D5;border-radius:11px;filter:blur(10px)"></div><div style="position:absolute;left:16px;top:102px;width:130px;height:22px;background:#D6D6D6;border-radius:11px;filter:blur(9px)"></div><div style="position:absolute;left:12px;top:148px;width:100px;height:26px;background:#D2D2D2;border-radius:13px;filter:blur(9px)"></div></div>
<div class="r" style="left:1252px;top:337px;width:394px;height:119px;overflow:hidden;background:linear-gradient(90deg,#E5E5E5,#ECECEC 50%,#EFEFEF)"><div style="position:absolute;left:10px;top:0px;width:240px;height:20px;background:#D8D8D8;border-radius:10px;filter:blur(9px)"></div><div style="position:absolute;left:20px;top:45px;width:330px;height:16px;background:#E4E4E4;border-radius:8px;filter:blur(10px)"></div><div style="position:absolute;left:15px;top:96px;width:350px;height:24px;background:#D6D6D6;border-radius:12px;filter:blur(10px)"></div></div>
<div class="r" style="left:256px;top:551px;width:200px;height:40px;border:1px solid #B4B4B4;border-bottom:none;border-radius:3px 3px 0 0"></div>
<div class="r" style="left:256px;top:586px;width:1739px;height:485px;border:1px solid #B4B4B4;border-radius:0 3px 0 0"></div>
<div class="r" style="left:257px;top:586px;width:198px;height:1px;background:#F2F2F2"></div>
<div class="t" style="left:271px;top:561px;font-size:16.8px;color:#333;font-weight:400;">Товары и услуги</div>
<div class="r" style="left:270px;top:598px;width:200px;height:32px;background:linear-gradient(#F7F7F7,#E6E6E6);border:1px solid #AFAFAF;border-bottom-color:#8F8F8F;border-radius:3px;box-shadow:0 1px 1px rgba(0,0,0,0.18);"></div>
<div class="t" style="left:285px;top:609px;font-size:16.8px;color:#333;font-weight:400;">Добавить</div>
<div class="r" style="left:270px;top:641px;width:1711px;height:419px;border:1px solid #A5A5A5;background:#F2F2F2"></div>
<div class="r" style="left:271px;top:642px;width:1709px;height:38px;background:#E4E4E4"></div>
<div class="r" style="left:329px;top:642px;width:2px;height:38px;background:#F2F2F2"></div>
<div class="r" style="left:1931px;top:642px;width:2px;height:38px;background:#F2F2F2"></div>
<div class="t" style="left:281px;top:653px;font-size:16.8px;color:#333;font-weight:400;">N</div>
<div class="r" style="left:271px;top:680px;width:1709px;height:36px;background:#F2E6C0"></div>
<div class="r" style="left:271px;top:680px;width:58px;height:36px;background:#F0D98A"></div>
<div class="r" style="left:329px;top:680px;width:2px;height:36px;background:#F7F0DA"></div>
<div class="r" style="left:1931px;top:680px;width:2px;height:36px;background:#F7F0DA"></div>
<div class="r" style="left:271px;top:716px;width:1709px;height:1px;background:#E2E2E2"></div>
<div class="t" style="left:310px;top:692px;font-size:16.8px;color:#333;font-weight:400;">1</div>
<div class="t" style="left:1808px;top:654px;font-size:16.8px;color:#333;font-weight:400;">Ед. на границу</div>
<div class="t" style="left:1889px;top:693px;font-size:16.8px;color:#2C5DA8;font-weight:400;">&lt;...&gt;</div>
<div class="r" style="left:1890px;top:709px;width:33px;height:1px;background:#2C5DA8"></div>
<div class="r" style="left:1910px;top:598px;width:70px;height:32px;background:linear-gradient(#F7F7F7,#E6E6E6);border:1px solid #AFAFAF;border-bottom-color:#8F8F8F;border-radius:3px;box-shadow:0 1px 1px rgba(0,0,0,0.18);"></div>
<div class="t" style="left:1925px;top:609px;font-size:16.8px;color:#333;font-weight:400;">Еще</div>
<svg class="r" style="left:1963px;top:614px;" width="9" height="6" viewBox="0 0 9 6"><path d="M1.5 1 H7.5 L4.5 4.3Z" fill="#333"/></svg>
<div class="t" style="left:258px;top:1096px;font-size:16.8px;color:#1F4FA8;font-weight:400;">Реквизиты</div>
<div class="r" style="left:258px;top:1111px;width:120px;height:1px;background:#1F4FA8"></div>
<div class="t" style="left:257px;top:1143px;font-size:16.8px;color:#333;font-weight:400;">Состояние</div>
<div class="t" style="left:257px;top:1181px;font-size:16.8px;color:#333;font-weight:400;">Комментарий</div>
<div class="r" style="left:1700px;top:1083px;width:295px;height:43px;background:#CFCFCF"></div>
<div class="r" style="left:1700px;top:1090px;width:289px;height:30px;background:#D3D3D3;border:1px solid #C2C2C2;border-radius:4px"></div>
<div class="t" style="left:1890px;top:1097px;font-size:16.8px;color:#2C5DA8;font-weight:400;">I</div>
<div class="t" style="left:1899px;top:1097px;font-size:16.8px;color:#333;font-weight:400;">277 880,00</div>
<div class="r" style="left:341px;top:513px;width:1550px;height:700px;background:#fff;border:1px solid #9A9A9A;box-shadow:0 0 8px 2px rgba(0,0,0,0.16)"></div>
<div class="t" style="left:356px;top:526px;font-size:23.4px;color:#000;font-weight:400;">Настройка формы</div>
<svg class="r" style="left:1826px;top:529px;" width="5" height="5" viewBox="0 0 5 5"><circle cx="2.5" cy="2.5" r="1.7" fill="#555"/></svg>
<svg class="r" style="left:1826px;top:535px;" width="5" height="5" viewBox="0 0 5 5"><circle cx="2.5" cy="2.5" r="1.7" fill="#555"/></svg>
<svg class="r" style="left:1826px;top:541px;" width="5" height="5" viewBox="0 0 5 5"><circle cx="2.5" cy="2.5" r="1.7" fill="#555"/></svg>
<svg class="r" style="left:1857px;top:529px;" width="17" height="16.8" viewBox="0 0 17 16.8"><path d="M1.5 1.5 L15.5 15.5 M15.5 1.5 L1.5 15.5" stroke="#555" stroke-width="1.5"/></svg>
<div class="r" style="left:357px;top:570px;width:180px;height:32px;background:linear-gradient(#FFFFFF,#EDEDED);border:1px solid #B4B4B4;border-bottom-color:#959595;border-radius:3px;box-shadow:0 1px 1px rgba(0,0,0,0.16);"></div>
<svg class="r" style="left:366px;top:577px;" width="22" height="22" viewBox="0 0 22 22"><path d="M1.5 4.5 Q1.5 3 3 3 H7.5 L9 5 H16.5 Q18 5 18 6.5 V16.5 H1.5Z" fill="#F3CF73" stroke="#D29B3C" stroke-width="1"/><path d="M1.5 8 H18" stroke="#E2B356" stroke-width="1"/><path d="M15 11.5 V21 M10.3 16.2 H19.7" stroke="#17A025" stroke-width="2.6"/></svg>
<div class="t" style="left:392px;top:580px;font-size:16.8px;color:#333;font-weight:400;">Добавить группу</div>
<div class="r" style="left:547px;top:570px;width:167px;height:32px;background:linear-gradient(#FFFFFF,#EDEDED);border:1px solid #B4B4B4;border-bottom-color:#959595;border-radius:3px;box-shadow:0 1px 1px rgba(0,0,0,0.16);border-color:#D2D2D2;box-shadow:none"></div>
<svg class="r" style="left:556px;top:577px;" width="20" height="20" viewBox="0 0 20 20"><circle cx="10" cy="10" r="9" fill="#A6D9A9"/><path d="M10 5 V15 M5 10 H15" stroke="#fff" stroke-width="2.4"/></svg>
<div class="t" style="left:582px;top:580px;font-size:16.8px;color:#A6A6A6;font-weight:400;">Добавить поля</div>
<div class="r" style="left:738px;top:570px;width:37px;height:32px;background:linear-gradient(#FFFFFF,#EDEDED);border:1px solid #B4B4B4;border-bottom-color:#959595;border-radius:3px;box-shadow:0 1px 1px rgba(0,0,0,0.16);"></div>
<svg class="r" style="left:747px;top:577px;" width="20" height="20" viewBox="0 0 20 20"><circle cx="10" cy="10" r="9" fill="#D8232A"/><path d="M6.5 6.5 L13.5 13.5 M13.5 6.5 L6.5 13.5" stroke="#fff" stroke-width="2.2"/></svg>
<div class="r" style="left:786px;top:570px;width:37px;height:32px;background:linear-gradient(#FFFFFF,#EDEDED);border:1px solid #B4B4B4;border-bottom-color:#959595;border-radius:3px;box-shadow:0 1px 1px rgba(0,0,0,0.16);"></div>
<svg class="r" style="left:794px;top:578px;" width="21" height="18" viewBox="0 0 21 18"><path d="M10.5 1.2 L19.5 9.6 L14.5 9.6 L14.5 16.3 L6.5 16.3 L6.5 9.6 L1.5 9.6 Z" fill="#46AEEA" stroke="#2A83C6" stroke-width="1" stroke-linejoin="round"/></svg>
<div class="r" style="left:834px;top:570px;width:38px;height:32px;background:linear-gradient(#FFFFFF,#EDEDED);border:1px solid #B4B4B4;border-bottom-color:#959595;border-radius:3px;box-shadow:0 1px 1px rgba(0,0,0,0.16);"></div>
<svg class="r" style="left:842px;top:578px;" width="21" height="18" viewBox="0 0 21 18"><path d="M10.5 16.8 L19.5 8.4 L14.5 8.4 L14.5 1.7 L6.5 1.7 L6.5 8.4 L1.5 8.4 Z" fill="#46AEEA" stroke="#2A83C6" stroke-width="1" stroke-linejoin="round"/></svg>
<div class="r" style="left:882px;top:570px;width:38px;height:32px;background:linear-gradient(#FFFFFF,#EDEDED);border:1px solid #B4B4B4;border-bottom-color:#959595;border-radius:3px;box-shadow:0 1px 1px rgba(0,0,0,0.16);"></div>
<svg class="r" style="left:890px;top:575px;" width="24" height="23" viewBox="0 0 24 23"><rect x="8" y="1.5" width="12" height="12" rx="1.5" fill="#C9D7E3" stroke="#7E98B0" stroke-width="1"/><rect x="5" y="4.5" width="12" height="12" rx="1.5" fill="#DCE6EE" stroke="#7E98B0" stroke-width="1"/><rect x="2" y="8" width="12" height="12" rx="1.5" fill="#fff" stroke="#6F8AA3" stroke-width="1.2"/><path d="M3.5 13.5 L7 17 L16 8" fill="none" stroke="#4DB82E" stroke-width="2.6"/></svg>
<div class="r" style="left:930px;top:570px;width:38px;height:32px;background:linear-gradient(#FFFFFF,#EDEDED);border:1px solid #B4B4B4;border-bottom-color:#959595;border-radius:3px;box-shadow:0 1px 1px rgba(0,0,0,0.16);"></div>
<svg class="r" style="left:938px;top:575px;" width="24" height="23" viewBox="0 0 24 23"><rect x="8" y="1.5" width="12" height="12" rx="1.5" fill="#C9D7E3" stroke="#7E98B0" stroke-width="1"/><rect x="5" y="4.5" width="12" height="12" rx="1.5" fill="#DCE6EE" stroke="#7E98B0" stroke-width="1"/><rect x="2" y="8" width="12" height="12" rx="1.5" fill="#fff" stroke="#6F8AA3" stroke-width="1.2"/></svg>
<div class="r" style="left:992px;top:570px;width:37px;height:32px;background:linear-gradient(#FFFFFF,#EDEDED);border:1px solid #B4B4B4;border-bottom-color:#959595;border-radius:3px;box-shadow:0 1px 1px rgba(0,0,0,0.16);"></div>
<div class="t" style="left:1005px;top:581px;font-size:16.8px;color:#111;font-weight:400;">?</div>
<div class="r" style="left:1794px;top:570px;width:71px;height:32px;background:linear-gradient(#FFFFFF,#EDEDED);border:1px solid #B4B4B4;border-bottom-color:#959595;border-radius:3px;box-shadow:0 1px 1px rgba(0,0,0,0.16);"></div>
<div class="t" style="left:1808px;top:580px;font-size:16.8px;color:#333;font-weight:400;">Еще</div>
<svg class="r" style="left:1848px;top:586px;" width="9" height="6" viewBox="0 0 9 6"><path d="M1.5 1 H7.5 L4.5 4.3Z" fill="#333"/></svg>
<div class="t" style="left:357px;top:617px;font-size:16.8px;color:#333;font-weight:400;">Элементы формы</div>
<div class="t" style="left:1211px;top:617px;font-size:16.8px;color:#333;font-weight:400;">Свойства элемента формы</div>
<div class="r" style="left:357px;top:646px;width:842px;height:540px;border:1px solid #A3A3A3;background:#fff"></div>
<svg class="r" style="left:1183px;top:655px;" width="10" height="8" viewBox="0 0 10 8"><path d="M1 7 L5 1 L9 7Z" fill="#555"/></svg>
<div class="r" style="left:1184px;top:673px;width:10px;height:520px;background:#D6D6D6;border-radius:5px"></div>
<div class="r" style="left:1184px;top:747px;width:10px;height:446px;background:#A6A6A6;border-radius:5px"></div>
<div class="r" style="left:1204px;top:615px;width:1px;height:560px;border-left:1px dotted #9A9A9A"></div>
<svg class="r" style="left:396px;top:660px;" width="12" height="12" viewBox="0 0 12 12"><circle cx="6" cy="6" r="5.2" fill="#fff" stroke="#C4C4C4" stroke-width="1.1"/><path d="M3 6 H9" stroke="#666" stroke-width="1.2"/></svg>
<svg class="r" style="left:419px;top:654px;" width="22" height="22" viewBox="0 0 22 22"><rect x="0.5" y="3.5" width="18" height="17.5" rx="2.5" fill="#fff" stroke="#8A8A8A" stroke-width="1"/><path d="M4.8 10 L9.4 15.3 L18.8 2.4" fill="none" stroke="#0E9B47" stroke-width="2.6" stroke-linecap="round" stroke-linejoin="miter"/></svg>
<svg class="r" style="left:448px;top:658px;" width="19" height="16" viewBox="0 0 19 16"><path d="M0.7 2.8 Q0.7 0.8 2.7 0.8 H6 Q8 0.8 8.5 2.8 H15.6 Q17.6 2.8 17.6 4.8 V13.6 Q17.6 14.6 16.6 14.6 H1.7 Q0.7 14.6 0.7 13.6 Z" fill="#F6D37B" stroke="#D8A548" stroke-width="1"/><path d="M1 4.8 H17.3" stroke="#E7BD5E" stroke-width="1"/><rect x="2" y="5.8" width="14.3" height="8" fill="#F9DD8F"/><path d="M2 9.6 H16.3" stroke="#F0CC75" stroke-width="0.8"/></svg>
<div class="t" style="left:480px;top:658px;font-size:16.8px;color:#333;font-weight:400;">Документ</div>
<svg class="r" style="left:422px;top:696px;" width="12" height="12" viewBox="0 0 12 12"><circle cx="6" cy="6" r="5.2" fill="#fff" stroke="#C4C4C4" stroke-width="1.1"/><path d="M3 6 H9" stroke="#666" stroke-width="1.2"/></svg>
<svg class="r" style="left:445px;top:690px;" width="22" height="22" viewBox="0 0 22 22"><rect x="0.5" y="3.5" width="18" height="17.5" rx="2.5" fill="#fff" stroke="#8A8A8A" stroke-width="1"/><path d="M4.8 10 L9.4 15.3 L18.8 2.4" fill="none" stroke="#0E9B47" stroke-width="2.6" stroke-linecap="round" stroke-linejoin="miter"/></svg>
<svg class="r" style="left:474px;top:694px;" width="19" height="16" viewBox="0 0 19 16"><path d="M0.7 2.8 Q0.7 0.8 2.7 0.8 H6 Q8 0.8 8.5 2.8 H15.6 Q17.6 2.8 17.6 4.8 V13.6 Q17.6 14.6 16.6 14.6 H1.7 Q0.7 14.6 0.7 13.6 Z" fill="#F6D37B" stroke="#D8A548" stroke-width="1"/><path d="M1 4.8 H17.3" stroke="#E7BD5E" stroke-width="1"/><rect x="2" y="5.8" width="14.3" height="8" fill="#F9DD8F"/><path d="M2 9.6 H16.3" stroke="#F0CC75" stroke-width="0.8"/></svg>
<div class="t" style="left:505px;top:695px;font-size:16.8px;color:#333;font-weight:400;">Основная рабочая область</div>
<svg class="r" style="left:447px;top:732px;" width="12" height="12" viewBox="0 0 12 12"><circle cx="6" cy="6" r="5.2" fill="#fff" stroke="#C4C4C4" stroke-width="1.1"/><path d="M3 6 H9 M6 3 V9" stroke="#666" stroke-width="1.2"/></svg>
<svg class="r" style="left:470px;top:726px;" width="22" height="22" viewBox="0 0 22 22"><rect x="0.5" y="3.5" width="18" height="17.5" rx="2.5" fill="#fff" stroke="#8A8A8A" stroke-width="1"/><path d="M4.8 10 L9.4 15.3 L18.8 2.4" fill="none" stroke="#0E9B47" stroke-width="2.6" stroke-linecap="round" stroke-linejoin="miter"/></svg>
<svg class="r" style="left:499px;top:730px;" width="19" height="16" viewBox="0 0 19 16"><path d="M0.7 2.8 Q0.7 0.8 2.7 0.8 H6 Q8 0.8 8.5 2.8 H15.6 Q17.6 2.8 17.6 4.8 V13.6 Q17.6 14.6 16.6 14.6 H1.7 Q0.7 14.6 0.7 13.6 Z" fill="#F6D37B" stroke="#D8A548" stroke-width="1"/><path d="M1 4.8 H17.3" stroke="#E7BD5E" stroke-width="1"/><rect x="2" y="5.8" width="14.3" height="8" fill="#F9DD8F"/><path d="M2 9.6 H16.3" stroke="#F0CC75" stroke-width="0.8"/></svg>
<div class="t" style="left:530px;top:731px;font-size:16.8px;color:#333;font-weight:400;">Командная панель</div>
<svg class="r" style="left:447px;top:768px;" width="12" height="12" viewBox="0 0 12 12"><circle cx="6" cy="6" r="5.2" fill="#fff" stroke="#C4C4C4" stroke-width="1.1"/><path d="M3 6 H9" stroke="#666" stroke-width="1.2"/></svg>
<svg class="r" style="left:470px;top:762px;" width="22" height="22" viewBox="0 0 22 22"><rect x="0.5" y="3.5" width="18" height="17.5" rx="2.5" fill="#fff" stroke="#8A8A8A" stroke-width="1"/><path d="M4.8 10 L9.4 15.3 L18.8 2.4" fill="none" stroke="#0E9B47" stroke-width="2.6" stroke-linecap="round" stroke-linejoin="miter"/></svg>
<svg class="r" style="left:499px;top:766px;" width="19" height="16" viewBox="0 0 19 16"><path d="M0.7 2.8 Q0.7 0.8 2.7 0.8 H6 Q8 0.8 8.5 2.8 H15.6 Q17.6 2.8 17.6 4.8 V13.6 Q17.6 14.6 16.6 14.6 H1.7 Q0.7 14.6 0.7 13.6 Z" fill="#F6D37B" stroke="#D8A548" stroke-width="1"/><path d="M1 4.8 H17.3" stroke="#E7BD5E" stroke-width="1"/><rect x="2" y="5.8" width="14.3" height="8" fill="#F9DD8F"/><path d="M2 9.6 H16.3" stroke="#F0CC75" stroke-width="0.8"/></svg>
<div class="t" style="left:530px;top:767px;font-size:16.8px;color:#333;font-weight:400;">Шапка</div>
<svg class="r" style="left:472px;top:804px;" width="12" height="12" viewBox="0 0 12 12"><circle cx="6" cy="6" r="5.2" fill="#fff" stroke="#C4C4C4" stroke-width="1.1"/><path d="M3 6 H9 M6 3 V9" stroke="#666" stroke-width="1.2"/></svg>
<svg class="r" style="left:495px;top:798px;" width="22" height="22" viewBox="0 0 22 22"><rect x="0.5" y="3.5" width="18" height="17.5" rx="2.5" fill="#fff" stroke="#8A8A8A" stroke-width="1"/><path d="M4.8 10 L9.4 15.3 L18.8 2.4" fill="none" stroke="#0E9B47" stroke-width="2.6" stroke-linecap="round" stroke-linejoin="miter"/></svg>
<svg class="r" style="left:524px;top:802px;" width="19" height="16" viewBox="0 0 19 16"><path d="M0.7 2.8 Q0.7 0.8 2.7 0.8 H6 Q8 0.8 8.5 2.8 H15.6 Q17.6 2.8 17.6 4.8 V13.6 Q17.6 14.6 16.6 14.6 H1.7 Q0.7 14.6 0.7 13.6 Z" fill="#F6D37B" stroke="#D8A548" stroke-width="1"/><path d="M1 4.8 H17.3" stroke="#E7BD5E" stroke-width="1"/><rect x="2" y="5.8" width="14.3" height="8" fill="#F9DD8F"/><path d="M2 9.6 H16.3" stroke="#F0CC75" stroke-width="0.8"/></svg>
<div class="t" style="left:555px;top:803px;font-size:16.8px;color:#333;font-weight:400;">Шапка левая</div>
<svg class="r" style="left:472px;top:840px;" width="12" height="12" viewBox="0 0 12 12"><circle cx="6" cy="6" r="5.2" fill="#fff" stroke="#C4C4C4" stroke-width="1.1"/><path d="M3 6 H9" stroke="#666" stroke-width="1.2"/></svg>
<svg class="r" style="left:495px;top:834px;" width="22" height="22" viewBox="0 0 22 22"><rect x="0.5" y="3.5" width="18" height="17.5" rx="2.5" fill="#fff" stroke="#8A8A8A" stroke-width="1"/><path d="M4.8 10 L9.4 15.3 L18.8 2.4" fill="none" stroke="#0E9B47" stroke-width="2.6" stroke-linecap="round" stroke-linejoin="miter"/></svg>
<svg class="r" style="left:524px;top:838px;" width="19" height="16" viewBox="0 0 19 16"><path d="M0.7 2.8 Q0.7 0.8 2.7 0.8 H6 Q8 0.8 8.5 2.8 H15.6 Q17.6 2.8 17.6 4.8 V13.6 Q17.6 14.6 16.6 14.6 H1.7 Q0.7 14.6 0.7 13.6 Z" fill="#F6D37B" stroke="#D8A548" stroke-width="1"/><path d="M1 4.8 H17.3" stroke="#E7BD5E" stroke-width="1"/><rect x="2" y="5.8" width="14.3" height="8" fill="#F9DD8F"/><path d="M2 9.6 H16.3" stroke="#F0CC75" stroke-width="0.8"/></svg>
<div class="t" style="left:555px;top:840px;font-size:16.8px;color:#333;font-weight:400;">Шапка правая</div>
<svg class="r" style="left:497px;top:877px;" width="12" height="12" viewBox="0 0 12 12"><circle cx="6" cy="6" r="5.2" fill="#fff" stroke="#C4C4C4" stroke-width="1.1"/><path d="M3 6 H9" stroke="#666" stroke-width="1.2"/></svg>
<svg class="r" style="left:520px;top:871px;" width="22" height="22" viewBox="0 0 22 22"><rect x="0.5" y="3.5" width="18" height="17.5" rx="2.5" fill="#fff" stroke="#8A8A8A" stroke-width="1"/><path d="M4.8 10 L9.4 15.3 L18.8 2.4" fill="none" stroke="#0E9B47" stroke-width="2.6" stroke-linecap="round" stroke-linejoin="miter"/></svg>
<svg class="r" style="left:549px;top:875px;" width="19" height="16" viewBox="0 0 19 16"><path d="M0.7 2.8 Q0.7 0.8 2.7 0.8 H6 Q8 0.8 8.5 2.8 H15.6 Q17.6 2.8 17.6 4.8 V13.6 Q17.6 14.6 16.6 14.6 H1.7 Q0.7 14.6 0.7 13.6 Z" fill="#F6D37B" stroke="#D8A548" stroke-width="1"/><path d="M1 4.8 H17.3" stroke="#E7BD5E" stroke-width="1"/><rect x="2" y="5.8" width="14.3" height="8" fill="#F9DD8F"/><path d="M2 9.6 H16.3" stroke="#F0CC75" stroke-width="0.8"/></svg>
<div class="t" style="left:580px;top:876px;font-size:16.8px;color:#333;font-weight:400;">Состояние оплаты</div>
<svg class="r" style="left:522px;top:913px;" width="12" height="12" viewBox="0 0 12 12"><circle cx="6" cy="6" r="5.2" fill="#fff" stroke="#C4C4C4" stroke-width="1.1"/><path d="M3 6 H9" stroke="#666" stroke-width="1.2"/></svg>
<svg class="r" style="left:545px;top:907px;" width="22" height="22" viewBox="0 0 22 22"><rect x="0.5" y="3.5" width="18" height="17.5" rx="2.5" fill="#fff" stroke="#8A8A8A" stroke-width="1"/><path d="M4.8 10 L9.4 15.3 L18.8 2.4" fill="none" stroke="#0E9B47" stroke-width="2.6" stroke-linecap="round" stroke-linejoin="miter"/></svg>
<svg class="r" style="left:574px;top:911px;" width="19" height="16" viewBox="0 0 19 16"><path d="M0.7 2.8 Q0.7 0.8 2.7 0.8 H6 Q8 0.8 8.5 2.8 H15.6 Q17.6 2.8 17.6 4.8 V13.6 Q17.6 14.6 16.6 14.6 H1.7 Q0.7 14.6 0.7 13.6 Z" fill="#F6D37B" stroke="#D8A548" stroke-width="1"/><path d="M1 4.8 H17.3" stroke="#E7BD5E" stroke-width="1"/><rect x="2" y="5.8" width="14.3" height="8" fill="#F9DD8F"/><path d="M2 9.6 H16.3" stroke="#F0CC75" stroke-width="0.8"/></svg>
<div class="t" style="left:605px;top:912px;font-size:16.8px;color:#333;font-weight:400;">Статус и срок оплаты</div>
<svg class="r" style="left:570px;top:943px;" width="22" height="22" viewBox="0 0 22 22"><rect x="0.5" y="3.5" width="18" height="17.5" rx="2.5" fill="#fff" stroke="#8A8A8A" stroke-width="1"/><path d="M4.8 10 L9.4 15.3 L18.8 2.4" fill="none" stroke="#0E9B47" stroke-width="2.6" stroke-linecap="round" stroke-linejoin="miter"/></svg>
<div class="r" style="left:601px;top:953px;width:13px;height:5px;background:linear-gradient(#F39090,#D84848);border-radius:2.5px"></div>
<div class="t" style="left:630px;top:948px;font-size:16.8px;color:#333;font-weight:400;">Статус</div>
<svg class="r" style="left:570px;top:979px;" width="22" height="22" viewBox="0 0 22 22"><rect x="0.5" y="3.5" width="18" height="17.5" rx="2.5" fill="#fff" stroke="#8A8A8A" stroke-width="1"/><path d="M4.8 10 L9.4 15.3 L18.8 2.4" fill="none" stroke="#0E9B47" stroke-width="2.6" stroke-linecap="round" stroke-linejoin="miter"/></svg>
<div class="r" style="left:601px;top:989px;width:13px;height:5px;background:linear-gradient(#F39090,#D84848);border-radius:2.5px"></div>
<div class="t" style="left:630px;top:984px;font-size:16.8px;color:#333;font-weight:400;">Оплата до</div>
<svg class="r" style="left:522px;top:1022px;" width="12" height="12" viewBox="0 0 12 12"><circle cx="6" cy="6" r="5.2" fill="#fff" stroke="#C4C4C4" stroke-width="1.1"/><path d="M3 6 H9" stroke="#666" stroke-width="1.2"/></svg>
<svg class="r" style="left:545px;top:1016px;" width="22" height="22" viewBox="0 0 22 22"><rect x="0.5" y="3.5" width="18" height="17.5" rx="2.5" fill="#fff" stroke="#8A8A8A" stroke-width="1"/><path d="M4.8 10 L9.4 15.3 L18.8 2.4" fill="none" stroke="#0E9B47" stroke-width="2.6" stroke-linecap="round" stroke-linejoin="miter"/></svg>
<svg class="r" style="left:574px;top:1020px;" width="19" height="16" viewBox="0 0 19 16"><path d="M0.7 2.8 Q0.7 0.8 2.7 0.8 H6 Q8 0.8 8.5 2.8 H15.6 Q17.6 2.8 17.6 4.8 V13.6 Q17.6 14.6 16.6 14.6 H1.7 Q0.7 14.6 0.7 13.6 Z" fill="#F6D37B" stroke="#D8A548" stroke-width="1"/><path d="M1 4.8 H17.3" stroke="#E7BD5E" stroke-width="1"/><rect x="2" y="5.8" width="14.3" height="8" fill="#F9DD8F"/><path d="M2 9.6 H16.3" stroke="#F0CC75" stroke-width="0.8"/></svg>
<div class="t" style="left:605px;top:1020px;font-size:16.8px;color:#333;font-weight:400;">Информация об оплате</div>
<svg class="r" style="left:570px;top:1052px;" width="22" height="22" viewBox="0 0 22 22"><rect x="0.5" y="3.5" width="18" height="17.5" rx="2.5" fill="#fff" stroke="#8A8A8A" stroke-width="1"/><path d="M4.8 10 L9.4 15.3 L18.8 2.4" fill="none" stroke="#0E9B47" stroke-width="2.6" stroke-linecap="round" stroke-linejoin="miter"/></svg>
<div class="r" style="left:601px;top:1062px;width:13px;height:5px;background:linear-gradient(#F39090,#D84848);border-radius:2.5px"></div>
<div class="t" style="left:630px;top:1057px;font-size:16.8px;color:#333;font-weight:400;">Оплатить</div>
<div class="r" style="left:626px;top:1082px;width:259px;height:36px;background:#FCE391;border:2px solid #F2C22E"></div>
<svg class="r" style="left:570px;top:1088px;" width="22" height="22" viewBox="0 0 22 22"><rect x="0.5" y="3.5" width="18" height="17.5" rx="2.5" fill="#fff" stroke="#8A8A8A" stroke-width="1"/><path d="M4.8 10 L9.4 15.3 L18.8 2.4" fill="none" stroke="#0E9B47" stroke-width="2.6" stroke-linecap="round" stroke-linejoin="miter"/></svg>
<div class="r" style="left:601px;top:1098px;width:13px;height:5px;background:linear-gradient(#F39090,#D84848);border-radius:2.5px"></div>
<div class="t" style="left:630px;top:1093px;font-size:16.8px;color:#333;font-weight:400;">Ожидается оплата</div>
<svg class="r" style="left:520px;top:1124px;" width="22" height="22" viewBox="0 0 22 22"><rect x="0.5" y="3.5" width="18" height="17.5" rx="2.5" fill="#fff" stroke="#8A8A8A" stroke-width="1"/><path d="M4.8 10 L9.4 15.3 L18.8 2.4" fill="none" stroke="#0E9B47" stroke-width="2.6" stroke-linecap="round" stroke-linejoin="miter"/></svg>
<div class="r" style="left:551px;top:1134px;width:13px;height:5px;background:linear-gradient(#F39090,#D84848);border-radius:2.5px"></div>
<div class="t" style="left:580px;top:1129px;font-size:16.8px;color:#333;font-weight:400;">Организация</div>
<svg class="r" style="left:520px;top:1160px;" width="22" height="22" viewBox="0 0 22 22"><rect x="0.5" y="3.5" width="18" height="17.5" rx="2.5" fill="#fff" stroke="#8A8A8A" stroke-width="1"/><path d="M4.8 10 L9.4 15.3 L18.8 2.4" fill="none" stroke="#0E9B47" stroke-width="2.6" stroke-linecap="round" stroke-linejoin="miter"/></svg>
<div class="r" style="left:551px;top:1170px;width:13px;height:5px;background:linear-gradient(#F39090,#D84848);border-radius:2.5px"></div>
<div class="t" style="left:580px;top:1165px;font-size:16.8px;color:#333;font-weight:400;">Подразделение</div>
<div class="r" style="left:342px;top:1169px;width:1548px;height:33px;background:#F0F0F0"></div>
<div class="r" style="left:375px;top:1169px;width:1440px;height:33px;background:#CBCBCB"></div>
<svg class="r" style="left:349px;top:1177px;" width="14" height="16.8" viewBox="0 0 14 16.8"><path d="M11 2 L4 8.5 L11 15" fill="none" stroke="#555" stroke-width="3.2"/></svg>
<svg class="r" style="left:1834px;top:1177px;" width="14" height="16.8" viewBox="0 0 14 16.8"><path d="M3 2 L10 8.5 L3 15" fill="none" stroke="#555" stroke-width="3.2"/></svg>
<div class="r" style="left:342px;top:1202px;width:1548px;height:10px;background:#fff"></div>
<div class="t" style="left:1211px;top:650px;font-size:16.8px;color:#333;font-weight:400;">Заголовок:</div>
<div class="r" style="left:1459px;top:646px;width:430px;height:69px;border:1px solid #9A9A9A;border-radius:3px;background:#fff"></div>
<div class="t" style="left:1465px;top:652px;font-size:16.8px;color:#333;font-weight:400;">Ожидается оплата</div>
<div class="t" style="left:1211px;top:734px;font-size:16.8px;color:#333;font-weight:400;">Положение заголовка:</div>
<div class="r" style="left:1459px;top:726px;width:430px;height:31px;border:1px solid #9A9A9A;border-radius:3px;background:#fff"></div>
<div class="r" style="left:1839px;top:726px;width:1px;height:31px;background:#9A9A9A"></div>
<svg class="r" style="left:1847px;top:739px;" width="8" height="5" viewBox="0 0 8 5"><path d="M0.5 0.5 H7.5 L4 4.5Z" fill="#444"/></svg>
<div class="t" style="left:1464px;top:734px;font-size:16.8px;color:#333;font-weight:400;">Нет</div>
<div class="t" style="left:1211px;top:771px;font-size:16.8px;color:#333;font-weight:400;">Подсказка:</div>
<div class="r" style="left:1459px;top:769px;width:430px;height:68px;border:1px solid #9A9A9A;border-radius:3px;background:#fff"></div>
<div class="t" style="left:1211px;top:856px;font-size:16.8px;color:#333;font-weight:400;">Представление подсказки:</div>
<div class="r" style="left:1459px;top:849px;width:430px;height:31px;border:1px solid #9A9A9A;border-radius:3px;background:#fff"></div>
<div class="r" style="left:1839px;top:849px;width:1px;height:31px;background:#9A9A9A"></div>
<svg class="r" style="left:1847px;top:862px;" width="8" height="5" viewBox="0 0 8 5"><path d="M0.5 0.5 H7.5 L4 4.5Z" fill="#444"/></svg>
<div class="t" style="left:1464px;top:857px;font-size:16.8px;color:#333;font-weight:400;">Авто</div>
<div class="t" style="left:1211px;top:894px;font-size:16.8px;color:#333;font-weight:400;">Активизировать при открытии:</div>
<div class="r" style="left:1460px;top:892px;width:19px;height:19px;border:1px solid #9A9A9A;border-radius:3px;background:#fff"></div>
<div class="t" style="left:1211px;top:932px;font-size:16.8px;color:#333;font-weight:400;">Ширина:</div>
<div class="r" style="left:1289px;top:924px;width:152px;height:31px;border:1px solid #9A9A9A;border-radius:3px;background:#fff"></div>
<div class="r" style="left:1415px;top:924px;width:1px;height:31px;background:#9A9A9A"></div>
<div class="r" style="left:1415px;top:939px;width:26px;height:1px;background:#D0D0D0"></div>
<svg class="r" style="left:1423px;top:930px;" width="8" height="5" viewBox="0 0 8 5"><path d="M1 4 L4 1 L7 4Z" fill="#777"/></svg>
<svg class="r" style="left:1423px;top:944px;" width="8" height="5" viewBox="0 0 8 5"><path d="M1 1 L4 4 L7 1Z" fill="#777"/></svg>
<div class="t" style="left:1295px;top:931px;width:116px;text-align:right;font-size:16.8px;color:#333">10</div>
<div class="t" style="left:1453px;top:932px;font-size:16.8px;color:#333;font-weight:400;">Высота:</div>
<div class="r" style="left:1527px;top:924px;width:153px;height:31px;border:1px solid #9A9A9A;border-radius:3px;background:#fff"></div>
<div class="r" style="left:1654px;top:924px;width:1px;height:31px;background:#9A9A9A"></div>
<div class="r" style="left:1654px;top:939px;width:26px;height:1px;background:#D0D0D0"></div>
<svg class="r" style="left:1662px;top:930px;" width="8" height="5" viewBox="0 0 8 5"><path d="M1 4 L4 1 L7 4Z" fill="#777"/></svg>
<svg class="r" style="left:1662px;top:944px;" width="8" height="5" viewBox="0 0 8 5"><path d="M1 1 L4 4 L7 1Z" fill="#777"/></svg>
<div class="t" style="left:1534px;top:931px;width:115px;text-align:right;font-size:16.8px;color:#333">0</div>
<div class="t" style="left:1211px;top:973px;font-size:16.8px;color:#333;font-weight:400;">Растягивать по горизонтали:</div>
<div class="r" style="left:1444px;top:966px;width:445px;height:31px;border:1px solid #9A9A9A;border-radius:3px;background:#fff"></div>
<div class="r" style="left:1839px;top:966px;width:1px;height:31px;background:#9A9A9A"></div>
<svg class="r" style="left:1847px;top:979px;" width="8" height="5" viewBox="0 0 8 5"><path d="M0.5 0.5 H7.5 L4 4.5Z" fill="#444"/></svg>
<div class="t" style="left:1449px;top:974px;font-size:16.8px;color:#333;font-weight:400;">Да</div>
<div class="t" style="left:1211px;top:1016px;font-size:16.8px;color:#333;font-weight:400;">Растягивать по вертикали:</div>
<div class="r" style="left:1444px;top:1010px;width:445px;height:30px;border:1px solid #9A9A9A;border-radius:3px;background:#fff"></div>
<div class="r" style="left:1839px;top:1010px;width:1px;height:30px;background:#9A9A9A"></div>
<svg class="r" style="left:1847px;top:1023px;" width="8" height="5" viewBox="0 0 8 5"><path d="M0.5 0.5 H7.5 L4 4.5Z" fill="#444"/></svg>
<div class="t" style="left:1449px;top:1018px;font-size:16.8px;color:#333;font-weight:400;">Авто</div>
<div class="r" style="left:1857px;top:615px;width:33px;height:554px;background:#F0F0F0"></div>
<div class="r" style="left:1857px;top:648px;width:33px;height:352px;background:#CBCBCB"></div>
<svg class="r" style="left:1865px;top:624px;" width="16" height="14" viewBox="0 0 16 14"><path d="M0 13 L0 8.8 L7.7 0.5 L15.4 8.8 L15.4 13 L7.7 4.8Z" fill="#555"/></svg>
<svg class="r" style="left:1865px;top:1147px;" width="17" height="14" viewBox="0 0 17 14"><path d="M0 0 L0 4.2 L8.2 13 L16.4 4.2 L16.4 0 L8.2 8.5Z" fill="#555"/></svg>
<div class="r" style="left:1471px;top:262px;width:198px;height:51px;border:6px solid #B20A1E;border-radius:3px"></div>
<div class="r" style="left:556px;top:1072px;width:355px;height:55px;border:6px solid #B20A1E;border-radius:3px"></div>
<svg class="r" style="left:1661px;top:305px;" width="24" height="24" viewBox="0 0 24 24"><circle cx="12" cy="12" r="10.8" fill="#B20A1E"/><text x="12" y="16.3" font-family="Liberation Sans" font-weight="700" font-size="12.5" fill="#fff" text-anchor="middle">1</text></svg>
<svg class="r" style="left:903px;top:1120px;" width="24" height="24" viewBox="0 0 24 24"><circle cx="12" cy="12" r="10.8" fill="#B20A1E"/><text x="12" y="16.3" font-family="Liberation Sans" font-weight="700" font-size="12.5" fill="#fff" text-anchor="middle">2</text></svg>
</body></html>
